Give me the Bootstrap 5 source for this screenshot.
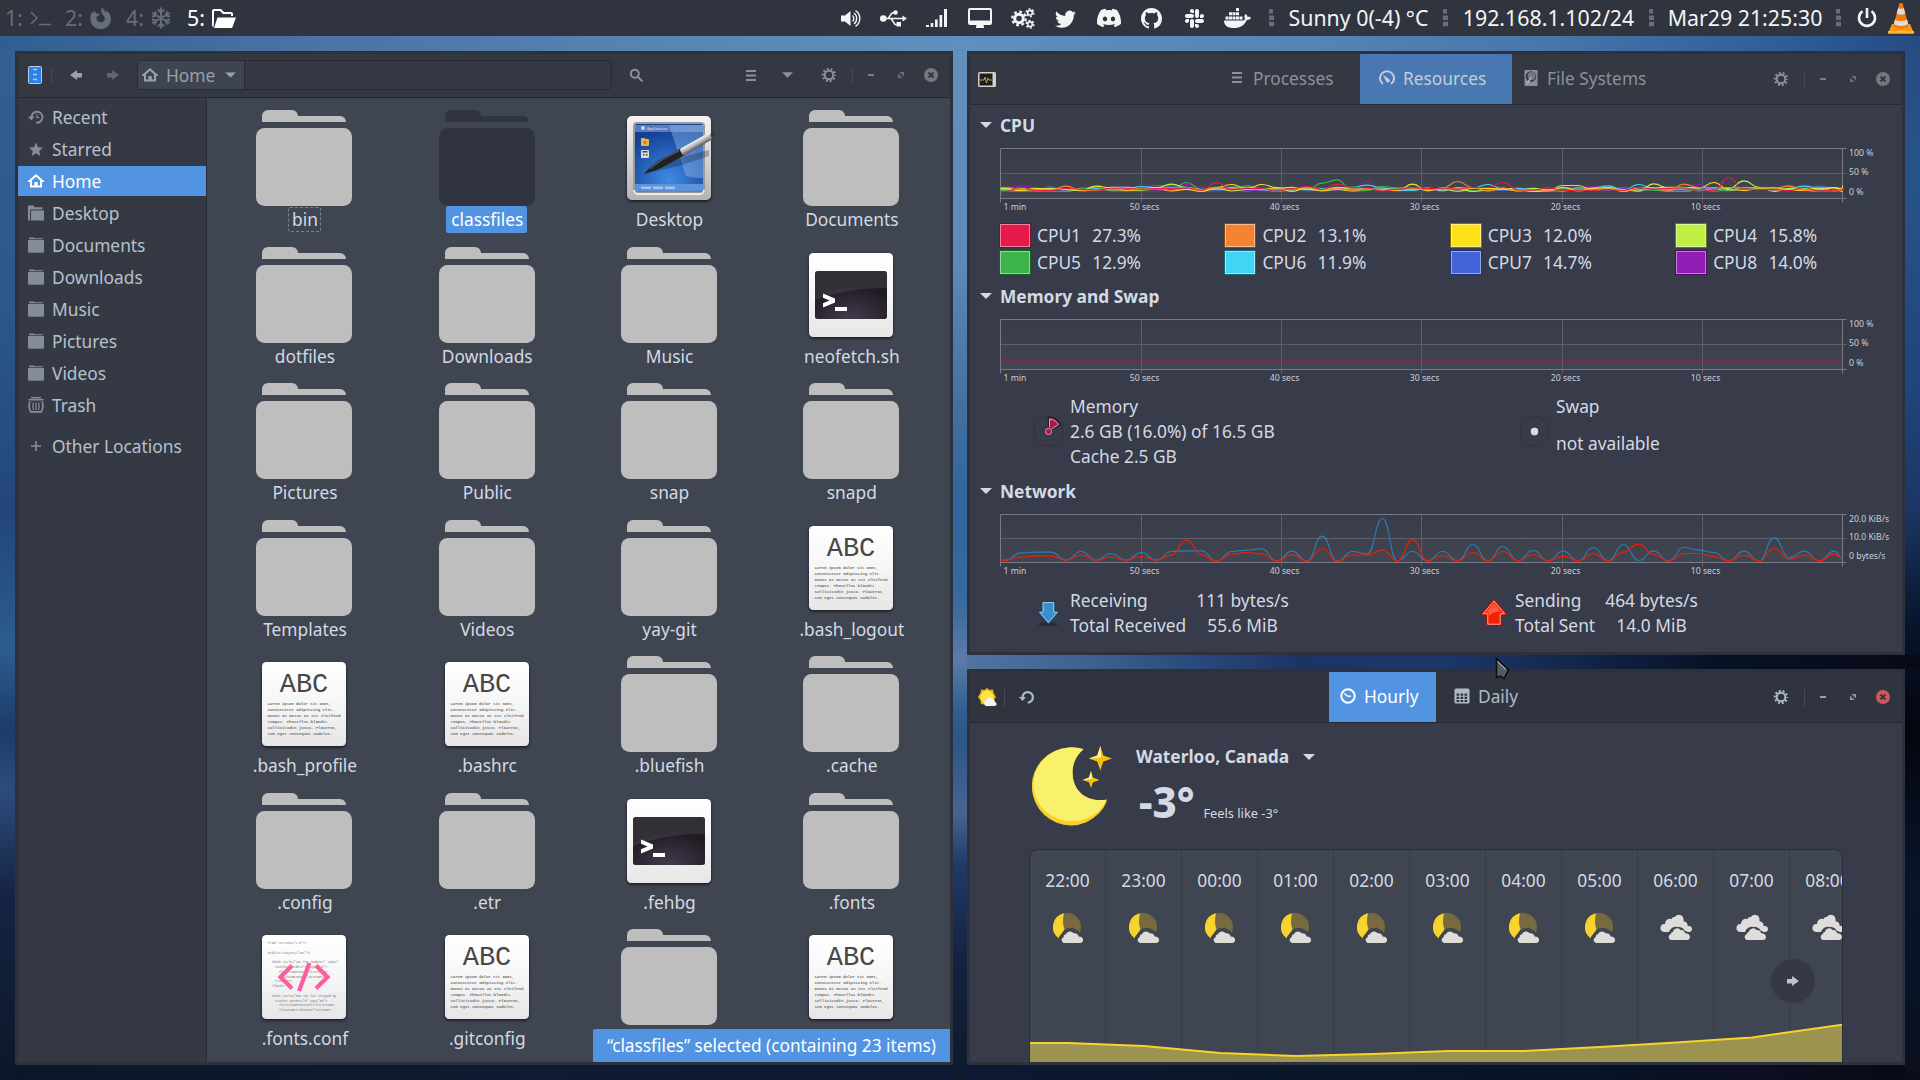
<!DOCTYPE html>
<html lang="en">
<head>
<meta charset="utf-8">
<title>Desktop</title>
<link rel="stylesheet" href="https://cdn.jsdelivr.net/npm/bootstrap@5.3.0/dist/css/bootstrap.min.css">
<style>
html,body{height:100%;overflow:hidden}
body{font-family:"Noto Sans",sans-serif;font-size:17.33px;line-height:25px;color:#d3dae3;
 background:
 linear-gradient(90deg,#315e92 0,#4a6fa4 14%,#5986b4 36%,#5f8fbe 50%,#5684b5 68%,#4a76ab 80%,#2f6096 92%,#264b83 100%) 0 36px/1920px 15px no-repeat,
 linear-gradient(90deg,#5273a0 0,#3d6290 13%,#28477a 25%,#1d3463 35%,#1b3768 50%,#15294f 62%,#061226 78%,#090a18 100%) 967px 655px/953px 14px no-repeat,
 linear-gradient(#335f92 0,#2c578b 25%,#23467a 45%,#2c5c8f 58%,#1d3c69 66%,#2e4b7c 72%,#152443 82%,#0c1729 100%) 0 51px/15px 1029px no-repeat,
 linear-gradient(#6190bd 0,#5d8ab8 20%,#44719f 34%,#31659d 44%,#3a6a9d 54%,#5d7ba9 59%,#30608f 64%,#2b5685 67%,#4a6492 74%,#203a69 79%,#152341 88%,#0d192b 100%) 953px 51px/14px 1029px no-repeat,
 linear-gradient(#264d84 0,#285389 12%,#1f467c 32%,#1c3564 45%,#07142a 56%,#05050e 66%,#08142a 80%,#06152a 88%,#0b0d1b 100%) 1905px 51px/15px 1029px no-repeat,
 linear-gradient(90deg,#0b1729 0,#101a32 28%,#0d1832 52%,#091728 70%,#071426 80%,#0b0e20 92%,#090a14 100%)}
svg{display:block;flex:none}
.topbar{height:36px;background:#2f343f;font-size:21.33px;color:#f3f4f5;line-height:30px}
.ws{color:#666d7b;width:61px;padding-left:5px;gap:7px}
.ws.w1{width:60px}
.ws.on{color:#fff}
.traybox{margin-left:586px}
.slot{width:43px}
.dots{width:25px;color:#666d7b}
.wx{width:149px}.ip{width:181px}.clk{width:162px}.pw{width:32px}
.win{position:absolute;border:3px solid #2d313c;background:#383b49;overflow:hidden}
.w-files{left:15px;top:51px;width:938px;height:1014px}
.w-mon{left:967px;top:51px;width:938px;height:604px}
.w-wx{left:967px;top:669px;width:938px;height:396px}
.hdr{height:44px;background:#333843;border-bottom:1px solid #262a33;color:#8a919d;padding-bottom:1px}
.hdr.tall{height:51px;padding-bottom:0}
.hdr.active{background:#2f343f;color:#b0b9c7}
.vsep{width:1px;height:17px;background:#454a55}
.app{width:33px}
.tall .app{width:34px}
.nb{width:36px}.nback{width:38px;margin-left:5px}
.pathbar{width:475px;height:30px;border:1px solid #272b34;border-radius:4px;margin-left:6px}
.pathbtn{width:107px;height:28px;background:#3e4450;border-right:1px solid #272b34;padding:0 8px 0 4px;border-radius:3px 0 0 3px;color:#99a0ad}
.pathbtn span{margin-left:8px}
.srch{width:48px}.c36{width:36px}.c46{width:46px}.c47{width:47px}.c44{width:44px}.c30{width:30px}
.ctl{padding-right:4px}.ctl .vsep{margin-right:3px}
.side{width:189px;background:#353944;border-right:1px solid #2b2e39;padding-top:4px;color:#b7c0cd}
.side a{height:30px;margin-bottom:2px;padding-left:10px;color:inherit;text-decoration:none}
.side a svg{margin-right:8px;color:#868d99}
.side a.sel{background:#5294e2;color:#fff}.side a.sel svg{color:#fff}
.side a.other{margin-top:11px}
.pane{background:#404552;padding:12px 0 0 6.3px;height:965px;overflow:hidden}
.grid4{width:729.2px}
.cell{width:182.3px;height:136.5px}
.lbl{padding:0 4px 0 5px;height:27px;line-height:27px;white-space:nowrap}
.lbl.foc{outline:1px dashed #7b818c;outline-offset:-2px;border-radius:3px}
.lbl.pick{background:#5294e2;color:#fff;border-radius:2px}
.toastbar{position:absolute;right:0;bottom:0;width:357px;height:33px;background:#5294e2;color:#fff;font-size:17.25px;line-height:33px;white-space:nowrap;border-radius:2px 0 0 0}
.tabx{height:50px;padding-bottom:2px}.tabx svg{margin-right:8px}
.tabs2{margin-left:209px}.tabs3{margin-left:280px}
.t1{width:147px;padding-left:16px}.t2{width:152px;padding-left:19px;background:#4877b1;color:#c3ccd8}.t3{width:146px;padding-left:11px}
.h1t{width:107px;padding-left:11px;background:#5294e2;color:#fff}.h2t{width:90px;padding-left:18px}
.sect{height:40px;font-weight:700;padding-left:10px}.sect svg{margin-right:8px}
.legend{padding-left:29px;height:54px;margin-top:7px}
.lg{width:225.4px;height:26px}
.sw{width:32px;height:25px;border:1px solid;margin-right:6px}
.sw i{display:block;height:100%;border:1px solid rgba(255,255,255,.45)}
.lt{width:104px}
svg text{font-family:"Noto Sans",sans-serif}
svg .mono text{font-family:"Liberation Mono",monospace}
.memrow{height:85px;padding-left:63px}.memrow>div{height:75px;margin-top:8px}
.memrow svg{margin-right:6px}
.m1{width:486px}
.netrow{height:50px;margin-top:7px;padding-left:66px}
.n1{width:396px}
.n1 svg{margin-right:10px}.n2 svg{margin-right:7px}
.nl1{width:119px}.nl2{width:83px}.nv{text-align:center;width:107px}
.wxhead{padding:19px 0 0 62px;height:126px}
.wxt{margin-left:29px;padding-top:2px}
.wxt b{font-weight:700}
.wxt .loc{gap:14px}
.tnow{margin:8px 0 0 3px}
.big{font-weight:800;font-size:42px;line-height:50px}
.feels{font-size:12.8px;line-height:16px;margin-left:9px}
.hours{margin-left:59px;width:814px;height:214px;background:#404552;border:1px solid #2b2e39;border-bottom:0;border-radius:9px 9px 0 0;overflow:hidden;position:relative}
.hr{width:76px;flex:none;border-right:1px solid #383c49;padding-top:18px}
.hr svg{margin:20px auto 0}
.temp{position:absolute;left:0;bottom:0}
.nextb{position:absolute;left:741px;top:109px;width:44px;height:44px;border-radius:50%;background:#353944;color:#b9c3d1}
.cursor{position:absolute;left:1495px;top:657px}
</style>
<script src="https://cdn.jsdelivr.net/npm/bootstrap@5.3.0/dist/js/bootstrap.bundle.min.js"></script>
</head>
<body>
<svg width="0" height="0" class="position-absolute">
<defs>
<linearGradient id="pg" x1="0" y1="0" x2="0" y2="1"><stop offset="0" stop-color="#fff"/><stop offset=".5" stop-color="#f6f6f6"/><stop offset="1" stop-color="#e6e6e6"/></linearGradient>
<linearGradient id="fr" x1="0" y1="0" x2="0" y2="1"><stop offset="0" stop-color="#f4f4f4"/><stop offset="1" stop-color="#b4b4b4"/></linearGradient>
<radialGradient id="scr" cx=".5" cy=".82" r=".75"><stop offset="0" stop-color="#3f8be4"/><stop offset="1" stop-color="#143f94"/></radialGradient>
<radialGradient id="trm" cx=".5" cy="1" r=".7"><stop offset="0" stop-color="#453a50"/><stop offset="1" stop-color="#1e1b21"/></radialGradient>
<linearGradient id="pen" x1="0" y1="0" x2="0" y2="1"><stop offset="0" stop-color="#f4f4f4"/><stop offset=".5" stop-color="#b5b5b5"/><stop offset="1" stop-color="#555"/></linearGradient>
<linearGradient id="gb" x1="0" y1="0" x2="0" y2="1"><stop offset="0" stop-color="#383b49"/><stop offset="1" stop-color="#414650"/></linearGradient>
<filter id="sh" x="-10%" y="-10%" width="120%" height="125%"><feDropShadow dx="0" dy="1.5" stdDeviation="1.5" flood-color="#000" flood-opacity=".65"/></filter>
<symbol id="folder" viewBox="0 0 96 96"><path fill="currentColor" d="M6 12V6a6 6 0 0 1 6-6h24a6 6 0 0 1 6 6h42a6 6 0 0 1 6 6z"/><rect y="18" width="96" height="78" rx="8.5" fill="currentColor"/></symbol>
<symbol id="abc" viewBox="0 0 96 96"><rect x="6" y="6" width="84" height="84" rx="4.5" fill="url(#pg)" filter="url(#sh)"/>
<g class="mono"><text x="48" y="36" text-anchor="middle" font-size="27" fill="#474747">ABC</text>
<g font-size="4.200" font-weight="700" fill="#777"><text x="11.500" y="48.500" textLength="64">Lorem ipsum dolor sit amet,</text><text x="11.500" y="54.500" textLength="67">consectetur adipiscing elit.</text><text x="11.500" y="60.500" textLength="73">Donec at metus at est eleifend</text><text x="11.500" y="66.500" textLength="60">tempus. Phasellus blandit</text><text x="11.500" y="72.500" textLength="70">sollicitudin justo. Placerat,</text><text x="11.500" y="78.500" textLength="65">sem eget consequat sodales.</text></g></g></symbol>
<symbol id="xml" viewBox="0 0 96 96"><rect x="6" y="6" width="84" height="84" rx="4.500" fill="url(#pg)" filter="url(#sh)"/>
<g class="mono" font-size="3.100" fill="#777"><text x="11.500" y="15">&lt;?xml version="1.0"?&gt;</text><text x="11.500" y="24.500">&lt;biblio subject="XML"/&gt;</text><text x="15.500" y="34">&lt;book title="XML for newbies" isbn="</text><text x="19" y="39">&lt;author gender="M" age="45"&gt;</text><text x="23" y="43.500">&lt;firstname&gt;Dan&lt;/firstname&gt;</text><text x="23" y="48.500">&lt;lastname&gt;Doe&lt;/lastname&gt;</text><text x="19" y="53">&lt;/author&gt;</text><text x="15.500" y="58">&lt;/book&gt;</text><text x="15.500" y="67.500">&lt;book title="How XML has changed my</text><text x="19" y="72.500">&lt;author gender="M" age="33"&gt;</text><text x="23" y="77">&lt;firstname&gt;Michael&lt;/firstname&gt;</text><text x="23" y="82">&lt;lastname&gt;Johnson&lt;/lastname&gt;</text></g>
<g fill="none" stroke="#fd5da0" stroke-width="4.200"><path d="M36 36.500 24.500 48 36 59.500M60 36.500 71.500 48 60 59.500"/><path d="M53.500 34 43 62"/></g></symbol>
<symbol id="term" viewBox="0 0 96 96"><rect x="6" y="6" width="84" height="84" rx="4.500" fill="url(#pg)" filter="url(#sh)"/><rect x="12" y="24" width="72" height="48" rx="2.500" fill="url(#trm)"/><path d="M12 26.500a2.500 2.500 0 0 1 2.500-2.500h67a2.500 2.500 0 0 1 2.500 2.500V41c-28 0-52 4-72 12z" fill="#fff" opacity=".09"/><path d="M20 46.500v4.200l6.500 2.800-6.500 2.800v4.200l12-5v-4z" fill="#fff"/><rect x="32" y="60" width="12" height="4" fill="#fff"/></symbol>
<symbol id="desk" viewBox="0 0 96 96"><rect x="6" y="6" width="84" height="84" rx="5" fill="url(#fr)" filter="url(#sh)"/><rect x="12" y="12" width="72" height="72" rx="4" fill="#9b9b9b"/><path d="M13 80a4 4 0 0 0 4 4h62a4 4 0 0 0 4-4" fill="none" stroke="#fff" stroke-width="1.500"/><rect x="14" y="14" width="68" height="67.500" rx="2" fill="url(#scr)"/><rect x="14" y="15" width="68" height="7" fill="#6d92cb" opacity=".75"/><circle cx="22" cy="18" r="2" fill="#c8d8f0"/><text x="26" y="19.600" font-size="3.300" font-weight="700" fill="#b8cbea">Applications</text><path d="M48 15h34v53c-8 0-12-1-17-2z" fill="#8db8ec" opacity=".45"/><rect x="14" y="74" width="68" height="7" fill="#5d93db"/><path d="M20 76.500h10v2.500H20zM32 76.500h10v2.500H32zM44 76.500h10v2.500H44z" fill="#9fc4f0"/><rect x="20" y="29" width="8" height="7" rx="1" fill="#e9b04c"/><rect x="20" y="28" width="4" height="3" fill="#e9b04c"/><circle cx="24" cy="32.500" r="1.400" fill="#b97b20"/><rect x="20" y="40" width="8" height="8" rx="1" fill="#ddd"/><path d="M21.500 41h5v1.500h-5zM22 44h1.500v1.500H22zM25 44h1.500v1.500H25z" fill="#444"/><path d="M30 62 58 56 88 46V40L62 47z" fill="#123" opacity=".3"/><g transform="translate(23 64) rotate(-29.500)"><path d="M0 0C10-4 22-5.500 30-4H44V3.500H26C16 3.500 8 2 0 0z" fill="#222"/><path d="M8-1.500C18-4 24-3.500 42-3" stroke="#666" stroke-width="1" fill="none"/><rect x="43" y="-4" width="34" height="7.500" rx="2" fill="url(#pen)"/><rect x="77" y="-2" width="4" height="3.500" rx="1" fill="#333"/></g></symbol>
<symbol id="i-home" viewBox="0 0 16 16"><path fill="currentColor" fill-rule="evenodd" d="M8 1 0 8v1h2v5.500h12V9h2V8zM4 7.200 8 3.700l4 3.500v5.300h-2.200V9H6.400v3.500H4z"/></symbol>
<symbol id="i-fold" viewBox="0 0 16 16"><path fill="currentColor" d="M1 .5h5l1 .8h8v.9H1zM0 3h16v12a.8.800 0 0 1-.8.800H.8a.8.800 0 0 1-.8-.8z"/></symbol>
<symbol id="i-desk" viewBox="0 0 16 16"><path fill="currentColor" d="M0 .5h6v1.800h8.500V4.500H2V15.500H0zM3 5.500h13v10H3z"/></symbol>
<symbol id="i-gear" viewBox="0 0 16 16"><g fill="none" stroke="currentColor"><circle cx="8" cy="8" r="4.300" stroke-width="2"/><circle cx="8" cy="8" r="6.200" stroke-width="2" stroke-dasharray="1.950 1.946" stroke-dashoffset="1"/></g></symbol>
<symbol id="i-caret" viewBox="0 0 12 6"><path fill="currentColor" d="M0 0h12L6 6z"/></symbol>
<symbol id="i-max" viewBox="0 0 8 8"><path fill="currentColor" d="M2.500 1H7v4.500zM1 2.500 5.500 7H1z"/></symbol>
<symbol id="i-close" viewBox="0 0 14 14"><circle cx="7" cy="7" r="7" fill="currentColor"/><path d="m4.500 4.500 5 5m0-5-5 5" stroke="#2f343f" stroke-width="1.800"/></symbol>
<symbol id="i-arr" viewBox="0 0 12 10"><path fill="currentColor" d="M5 0v3H0v4.500h5V10l7-5z"/></symbol>
<symbol id="i-dots" viewBox="0 0 5 18"><path fill="currentColor" d="M0 1a1 1 0 0 1 1-1h3v4.500H0zM0 6.500h5V11H0zM0 12.800h5v4.400H0z"/></symbol>
<symbol id="moon" viewBox="0 0 30 30"><circle cx="14" cy="14" r="14" fill="#776a3e"/><path d="M11 .3A14 14 0 0 0 6 25.500L12.500 18C9 12 10 5 11 .3z" fill="#f6d32d"/><path d="M8.500 30.500a5 5 0 0 1-1.500-8l5-6.500 7-1.500 6 3 5.500 6-1 7z" fill="#404552"/><path d="M11 30a3 3 0 0 1-.3-5.800 2.300 2.300 0 0 1 2-2.700 4.600 4.600 0 0 1 8-1.200c2.600-.6 4.700 1.200 4.800 3.200 2.800-.2 4.700 1.300 4.500 3.700-.1 1.700-1.300 2.800-3 2.800z" fill="#deddda"/></symbol>
<symbol id="clouds" viewBox="0 0 32 27"><path d="M4 18a4 4 0 1 1 1-8 5 5 0 0 1 6.500-5C12.500 3 14 3 15 3a4.600 4.600 0 0 1 8.500 2.300l.2 2c3 .5 4.300 2.700 3.800 4.700 3-.4 4.500 1 4.500 3 0 1.700-1.200 3-3 3z" fill="#deddda"/><path d="M7 24a5 5 0 0 1 2-5.500 7 7 0 0 1 9-5.500c4 0 6 2 6.500 3.500 3 .5 5 3 5.300 5l.2 4z" fill="#404552"/><path d="M11 26a3 3 0 0 1-.3-5.800 2.300 2.300 0 0 1 2-2.200 4.600 4.600 0 0 1 8-2c2.600-.4 4.200 1.500 4.500 3.200 2.800 0 4.800 1.500 4.800 3.800 0 1.700-1.300 3-3 3z" fill="#deddda"/></symbol>
</defs>
</svg>

<nav class="topbar d-flex align-items-center text-nowrap">
  <div class="ws w1 d-flex align-items-center">1:<svg width="21" height="16" viewBox="0 0 21 16" fill="none" stroke="currentColor" stroke-width="1.500"><path d="m1 2 6 6-6 6M9 14.500h12"/></svg></div>
  <div class="ws d-flex align-items-center">2:<svg width="21" height="22" viewBox="0 0 21 22"><path fill="currentColor" fill-rule="evenodd" d="M12.500 0c.5 2.500 2 3.500 4 5.500.1-.8 0-1.500-.3-2.200C19 5.500 21 8.500 21 12A10.200 10 0 0 1 .3 12C.3 9 1 6.500 2.300 4.500v2C3 5.300 4 4.500 5 4c0 1.200.8 2 1.800 2.600 1 .3 2.200.3 3 .4-1 2-2.500 2-3 2.500-.6 1.500-.3 3 .5 4 2 2.500 5.500 2.200 7-.1 1-2 .3-4-1-5.200C10.500 6 10.800 2.500 12.500 0z"/></svg></div>
  <div class="ws d-flex align-items-center">4:<svg width="20" height="22" viewBox="0 0 20 22" fill="none" stroke="currentColor" stroke-width="1.900"><path d="M10 .5v21M1 5.700l18 10.600M1 16.300 19 5.700M6.800 2.500 10 5.500l3.200-3M6.800 19.500l3.200-3 3.200 3M1 9.500l4-1L4 4.200M19 9.500l-4-1 1-4.300M1 12.500l4 1-1 4.300M19 12.500l-4 1 1 4.300"/></svg></div>
  <div class="ws on d-flex align-items-center">5:<svg width="24" height="19" viewBox="0 0 24 19"><path fill="currentColor" d="M2 0h7l3 3h7a2 2 0 0 1 2 2v2h-2V5h-8L8 2H2v11L1.500 18A2 2 0 0 1 0 16V2a2 2 0 0 1 2-2zM5.500 8.500H24L20.500 18a1.500 1.500 0 0 1-1.500 1H2z"/></svg></div>
  <div class="traybox d-flex align-items-center" id="tray">
    <div class="slot d-flex justify-content-center"><svg width="20" height="17" viewBox="0 0 20 17"><path fill="currentColor" d="M0 5.500h4L9.500 1v15L4 11.500H0z"/><path fill="none" stroke="currentColor" stroke-width="1.400" d="M11.500 5.500c1.700 1.500 1.700 4.500 0 6M13 3c3.500 2.500 3.500 8.500 0 11M14.500.7c5.700 3.500 5.700 12 0 15.600"/></svg></div>
    <div class="slot d-flex justify-content-center"><svg width="27" height="17" viewBox="0 0 27 17"><circle cx="3.300" cy="8.500" r="3.300" fill="currentColor"/><path fill="none" stroke="currentColor" stroke-width="1.500" d="M3 8.500h20M8 8.500l4-5.500h3M11 8.500l4 6h3"/><circle cx="15.500" cy="2.500" r="2.300" fill="currentColor"/><path fill="currentColor" d="M16.500 12H21v4.500h-4.500zM22.500 5.500 27 8.500l-4.500 3z"/></svg></div>
    <div class="slot d-flex justify-content-center"><svg width="21" height="18" viewBox="0 0 21 18"><path fill="currentColor" d="M0 16h3v2H0zM4.700 14h2.600v4H4.700zM9 10.500h2.700V18H9zM13.500 6h2.700v12h-2.700zM18 0h3v18h-3z"/></svg></div>
    <div class="slot d-flex justify-content-center"><svg width="24" height="20" viewBox="0 0 24 20"><path fill="currentColor" fill-rule="evenodd" d="M2 0h20a2 2 0 0 1 2 2v13a2 2 0 0 1-2 2h-6.500l.5 1.800V20H8v-1.200l.5-1.800H2a2 2 0 0 1-2-2V2a2 2 0 0 1 2-2zm0 2v10.500h20V2z"/></svg></div>
    <div class="slot d-flex justify-content-center"><svg width="24" height="21" viewBox="0 0 24 21" fill="none" stroke="currentColor"><circle cx="8" cy="10.500" r="4.300" stroke-width="3"/><circle cx="8" cy="10.500" r="6.800" stroke-width="2.200" stroke-dasharray="2.800 2.540"/><g id="sg"><circle cx="19" cy="4.700" r="2.300" stroke-width="1.600"/><circle cx="19" cy="4.700" r="3.800" stroke-width="1.500" stroke-dasharray="2 1.980"/></g><use href="#sg" y="11.500"/></svg></div>
    <div class="slot d-flex justify-content-center"><svg width="21" height="21" viewBox="0 0 16 16"><path fill="currentColor" d="M5.026 15c6.038 0 9.341-5.003 9.341-9.334 0-.14 0-.282-.006-.422A6.685 6.685 0 0 0 16 3.542a6.658 6.658 0 0 1-1.889.518 3.301 3.301 0 0 0 1.447-1.817 6.533 6.533 0 0 1-2.087.793A3.286 3.286 0 0 0 7.875 6.030a9.325 9.325 0 0 1-6.767-3.429 3.289 3.289 0 0 0 1.018 4.382A3.323 3.323 0 0 1 .64 6.575v.045a3.288 3.288 0 0 0 2.632 3.218 3.203 3.203 0 0 1-.865.115 3.230 3.230 0 0 1-.614-.057 3.283 3.283 0 0 0 3.067 2.277A6.588 6.588 0 0 1 .78 13.580a6.320 6.320 0 0 1-.78-.045A9.344 9.344 0 0 0 5.026 15z"/></svg></div>
    <div class="slot d-flex justify-content-center"><svg width="24" height="24" viewBox="0 0 16 16"><path fill="currentColor" d="M13.545 2.907a13.227 13.227 0 0 0-3.257-1.011.05.050 0 0 0-.052.025c-.141.250-.297.577-.406.833a12.190 12.190 0 0 0-3.658 0 8.258 8.258 0 0 0-.412-.833.051.051 0 0 0-.052-.025c-1.125.194-2.220.534-3.257 1.011a.041.041 0 0 0-.021.018C.356 6.024-.213 9.047.066 12.032c.001.014.010.028.021.037a13.276 13.276 0 0 0 3.995 2.020.05.050 0 0 0 .056-.019c.308-.420.582-.863.818-1.329a.05.050 0 0 0-.010-.059 8.875 8.875 0 0 1-1.266-.606.05.050 0 0 1-.005-.085c.084-.063.168-.129.248-.195a.05.050 0 0 1 .051-.007c2.619 1.196 5.454 1.196 8.041 0a.052.052 0 0 1 .053.007c.080.066.164.132.248.195a.051.051 0 0 1-.004.085 8.254 8.254 0 0 1-1.249.594.05.050 0 0 0-.027.071c.240.465.515.909.817 1.329a.05.050 0 0 0 .056.019 13.235 13.235 0 0 0 4.001-2.020.049.049 0 0 0 .021-.037c.334-3.451-.559-6.449-2.366-9.106a.034.034 0 0 0-.020-.019Zm-8.198 7.307c-.789 0-1.438-.724-1.438-1.612 0-.889.637-1.613 1.438-1.613.807 0 1.450.730 1.438 1.613 0 .888-.637 1.612-1.438 1.612Zm5.316 0c-.788 0-1.438-.724-1.438-1.612 0-.889.637-1.613 1.438-1.613.807 0 1.451.730 1.438 1.613 0 .888-.631 1.612-1.438 1.612Z"/></svg></div>
    <div class="slot d-flex justify-content-center"><svg width="21" height="21" viewBox="0 0 16 16"><path fill="currentColor" d="M8 0C3.580 0 0 3.580 0 8c0 3.540 2.290 6.530 5.470 7.590.400.070.550-.170.550-.380 0-.190-.010-.820-.010-1.490-2.010.370-2.530-.490-2.690-.940-.090-.230-.480-.940-.820-1.130-.280-.150-.680-.520-.010-.530.630-.010 1.080.580 1.230.820.720 1.210 1.870.870 2.330.660.070-.520.280-.870.510-1.070-1.780-.200-3.640-.890-3.640-3.950 0-.870.310-1.590.820-2.150-.080-.200-.360-1.020.080-2.120 0 0 .670-.210 2.200.820.640-.180 1.320-.270 2-.270.680 0 1.360.090 2 .270 1.530-1.040 2.200-.820 2.200-.820.440 1.100.160 1.920.080 2.120.510.560.820 1.270.820 2.150 0 3.070-1.870 3.750-3.650 3.950.290.250.540.730.540 1.480 0 1.070-.010 1.930-.010 2.200 0 .210.150.460.550.380A8.012 8.012 0 0 0 16 8c0-4.420-3.580-8-8-8z"/></svg></div>
    <div class="slot d-flex justify-content-center"><svg width="19" height="19" viewBox="0 0 16 16"><path fill="currentColor" d="M3.362 10.110c0 .926-.756 1.681-1.681 1.681S0 11.036 0 10.111C0 9.186.756 8.430 1.680 8.430h1.682v1.680zm.846 0c0-.924.756-1.680 1.681-1.680s1.681.756 1.681 1.680v4.210c0 .924-.756 1.680-1.680 1.680a1.685 1.685 0 0 1-1.682-1.680v-4.210zM5.890 3.362c-.926 0-1.682-.756-1.682-1.681S4.964 0 5.890 0s1.680.756 1.680 1.680v1.682H5.890zm0 .846c.924 0 1.680.756 1.680 1.681S6.814 7.570 5.890 7.570H1.680C.757 7.570 0 6.814 0 5.890c0-.926.756-1.682 1.680-1.682h4.210zm6.749 1.682c0-.926.755-1.682 1.680-1.682.925 0 1.681.756 1.681 1.681s-.756 1.681-1.680 1.681h-1.681V5.890zm-.848 0c0 .924-.755 1.680-1.680 1.680A1.685 1.685 0 0 1 8.430 5.890V1.680C8.430.757 9.186 0 10.110 0c.926 0 1.681.756 1.681 1.680v4.210zm-1.681 6.748c.926 0 1.682.756 1.682 1.681S11.036 16 10.110 16s-1.681-.756-1.681-1.680v-1.682h1.680zm0-.847c-.924 0-1.680-.755-1.680-1.680 0-.925.756-1.681 1.680-1.681h4.210c.924 0 1.680.756 1.680 1.680 0 .926-.756 1.681-1.680 1.681h-4.210z"/></svg></div>
    <div class="slot d-flex justify-content-center"><svg width="27" height="20" viewBox="0 0 27 20"><path fill="currentColor" d="M12 0h3v3h-3zM5 4.300h3v3H5zM8.500 4.300h3v3h-3zM12 4.300h3v3h-3zM1.500 8.500h3v3h-3zM5 8.500h3v3H5zM8.500 8.500h3v3h-3zM12 8.500h3v3h-3zM15.500 8.500h3v3h-3zM0 12.500h18c2 0 3-.6 3-1.500-1-2-.6-3.800.5-5 1.500 1 2 2 2 3 1.200-.3 2.500-.1 3.500.5-.6 1.800-2 2.500-4.300 2.500C20.500 17.500 16 20 10 20 3.500 20 0 17.500 0 12.500z"/></svg></div>
    <div class="dots d-flex justify-content-center"><svg width="5" height="18"><use href="#i-dots"/></svg></div><div class="wx text-center">Sunny 0(-4) °C</div>
    <div class="dots d-flex justify-content-center"><svg width="5" height="18"><use href="#i-dots"/></svg></div><div class="ip text-center">192.168.1.102/24</div>
    <div class="dots d-flex justify-content-center"><svg width="5" height="18"><use href="#i-dots"/></svg></div><div class="clk text-center">Mar29 21:25:30</div>
    <div class="dots d-flex justify-content-center"><svg width="5" height="18"><use href="#i-dots"/></svg></div>
    <div class="pw d-flex justify-content-center"><svg width="20" height="20" viewBox="0 0 20 20" fill="none" stroke="currentColor" stroke-width="2.600"><path d="M5.500 3.300a8 8 0 1 0 9 0M10 0v10"/></svg></div>
    <svg class="ms-1" width="28" height="31" viewBox="0 0 28 31"><path d="M5 21h18l4 9.500H1z" fill="#ff9a0c"/><path d="M1 28h26v2.500H1z" fill="#ffb733"/><path d="M12.500 0h3l6.300 23.500c-4 3-11.600 3-15.600 0z" fill="#f47a0c"/><path d="m11.200 5-1.500 5.500c2 1.500 6.600 1.500 8.600 0L16.800 5c-1 1-4.600 1-5.600 0zM8 16.500 6.800 21c3.500 2.500 10.900 2.500 14.400 0L20 16.500c-3 2-9 2-12 0z" fill="#ddd"/></svg>
  </div>
</nav>

<section class="win w-files">
  <header class="hdr d-flex align-items-center">
    <div class="app d-flex justify-content-center"><svg width="14" height="18" viewBox="0 0 14 18"><rect x=".5" y=".5" width="13" height="17" rx="1" fill="#2c82e6" stroke="#b9cfe9"/><path d="M5 3.500h4M5 8.500h4M5 13.500h4" stroke="#a8ccf5" stroke-width="1.500"/></svg></div>
    <div class="vsep"></div>
    <div class="nback d-flex justify-content-center"><svg width="12" height="10" viewBox="0 0 12 10"><path fill="#99a0ad" d="M7 0v3h5v4.500H7V10L0 5z"/></svg></div>
    <div class="nb d-flex justify-content-center"><svg width="12" height="10" color="#5f6571"><use href="#i-arr"/></svg></div>
    <div class="pathbar"><div class="pathbtn d-flex align-items-center"><svg width="16" height="16"><use href="#i-home"/></svg><span>Home</span><svg class="ms-auto" width="11" height="6" viewBox="0 0 12 6"><use href="#i-caret"/></svg></div></div>
    <div class="srch d-flex justify-content-center"><svg width="15" height="15" viewBox="0 0 15 15" fill="none" stroke="currentColor" stroke-width="2"><circle cx="5.800" cy="5.800" r="4"/><path d="m8.500 8.500 5 5"/></svg></div>
    <div class="ctl ms-auto d-flex align-items-center">
      <div class="c36 d-flex justify-content-center"><svg width="10" height="11" viewBox="0 0 10 11"><path fill="currentColor" d="M0 0h10v2H0zM0 4.500h10v2H0zM0 9h10v2H0z"/></svg></div>
      <div class="c36 d-flex justify-content-center"><svg width="11" height="6"><use href="#i-caret"/></svg></div>
      <div class="c47 d-flex justify-content-center"><svg width="16" height="16"><use href="#i-gear"/></svg></div>
      <div class="vsep"></div>
      <div class="c30 d-flex justify-content-center"><svg width="6" height="2"><rect width="6" height="2" fill="#777d87"/></svg></div>
      <div class="c30 d-flex justify-content-center"><svg width="8" height="8" color="#6a707b"><use href="#i-max"/></svg></div>
      <div class="c30 d-flex justify-content-center"><svg width="14" height="14" color="#747881"><use href="#i-close"/></svg></div>
    </div>
  </header>
  <div class="d-flex">
    <nav class="side" id="side"></nav>
    <div class="pane flex-grow-1"><div class="grid4 d-flex flex-wrap" id="files"></div></div>
  </div>
  <div class="toastbar text-center">“classfiles” selected (containing 23 items)</div>
</section>

<section class="win w-mon">
  <header class="hdr tall d-flex align-items-center">
    <div class="app d-flex justify-content-center"><svg width="18" height="15" viewBox="0 0 18 15"><rect width="18" height="15" rx="1.500" fill="#d6cfc9"/><rect x="1.500" y="1.500" width="13" height="12" fill="#231a28"/><path d="M2 8h4l1-3 1.500 6L10 6l1 2h3" fill="none" stroke="#b8a428"/></svg></div>
    <div class="tabs2 d-flex">
      <div class="tabx t1 d-flex align-items-center"><svg width="16" height="16" viewBox="0 0 16 16"><path fill="currentColor" d="M3 2h10v2H3zM3 6.500h10v2H3zM3 11h10v2H3z"/></svg>Processes</div>
      <div class="tabx t2 d-flex align-items-center"><svg width="16" height="16" viewBox="0 0 16 16"><path fill="none" stroke="currentColor" stroke-width="2" d="M4 14A7 7 0 1 1 12 14"/><path fill="currentColor" d="m4 5 5.800 3.800a2 2 0 1 1-2.800 2.500z"/></svg>Resources</div>
      <div class="tabx t3 d-flex align-items-center"><svg width="16" height="16" viewBox="0 0 16 16"><rect x="1.500" width="13" height="16" rx="1" fill="currentColor"/><circle cx="8" cy="6.500" r="5.300" fill="#333843"/><circle cx="8.600" cy="6" r="4" fill="#737a86"/><path d="m3 13.500 5-7 1 .8-3.500 6.200z" fill="#b0b6c0"/></svg>File Systems</div>
    </div>
    <div class="ctl ms-auto d-flex align-items-center">
      <div class="c46 d-flex justify-content-center"><svg width="16" height="16"><use href="#i-gear"/></svg></div>
      <div class="vsep"></div>
      <div class="c30 d-flex justify-content-center"><svg width="6" height="2"><rect width="6" height="2" fill="#777d87"/></svg></div>
      <div class="c30 d-flex justify-content-center"><svg width="8" height="8" color="#6a707b"><use href="#i-max"/></svg></div>
      <div class="c30 d-flex justify-content-center"><svg width="14" height="14" color="#747881"><use href="#i-close"/></svg></div>
    </div>
  </header>
  <div class="sect d-flex align-items-center"><svg width="12" height="6"><use href="#i-caret"/></svg>CPU</div>
  <div id="g-cpu"></div>
  <div class="legend d-flex flex-wrap" id="legend"></div>
  <div class="sect d-flex align-items-center"><svg width="12" height="6"><use href="#i-caret"/></svg>Memory and Swap</div>
  <div id="g-mem"></div>
  <div class="memrow d-flex">
    <div class="m1 d-flex align-items-center"><svg width="31" height="31" viewBox="-15.500 -15.500 31 31"><circle r="14.800" fill="none" stroke="#30333e"/><path d="M0 0V-14.500A14 14 0 0 1 12-7z" fill="#ab1852" stroke="#24262e" stroke-width="1.500"/><path d="M1-3V-12.500A12 12 0 0 1 10-7L3-2.500" fill="#ab1852" stroke="#e59ab6"/><circle r="4.300" fill="#24262e"/><circle r="3.200" fill="#ab1852" stroke="#e59ab6"/></svg><div>Memory<br>2.6 GB (16.0%) of 16.5 GB<br>Cache 2.5 GB</div></div>
    <div class="d-flex align-items-center"><svg width="31" height="31" viewBox="-15.500 -15.500 31 31"><circle r="14.800" fill="none" stroke="#30333e"/><circle r="4.500" fill="#d3dae3" stroke="#2a2d36" stroke-width="1.200"/></svg><div class="d-flex flex-column h-100"><span class="mb-2 pb-1">Swap</span><span>not available</span></div></div>
  </div>
  <div class="sect d-flex align-items-center"><svg width="12" height="6"><use href="#i-caret"/></svg>Network</div>
  <div id="g-net"></div>
  <div class="netrow d-flex">
    <div class="d-flex align-items-center n1 flex-shrink-0 me-5">
      <svg width="24" height="30" viewBox="-2 0 28 30" overflow="visible"><ellipse cx="12" cy="28" rx="12" ry="2.500" fill="#000" opacity=".25"/><path d="M5 1.500h15V13h5.500L12.500 28-.5 13H5z" fill="#2f83bf" stroke="#153a5a" stroke-width="1"/><path d="M6.300 2.800h12.400v11.300h4L12.500 26 2.300 14.100h4z" fill="#3a8ecb" stroke="#aad2ec"/></svg>
      <div class="nl1">Receiving<br>Total Received</div><div class="nv">111 bytes/s<br>55.6 MiB</div>
    </div>
    <div class="d-flex align-items-center n2">
      <svg width="28" height="30" viewBox="0 0 28 30"><path d="M6.500 27.500V17H.5L14 1l13.500 16h-6v10.500z" fill="#f01c04" stroke="#8e1a10"/><path d="M7.800 26.200V15.700h-4.500L14 3l10.700 12.700h-4.500v10.500z" fill="#f22105" stroke="#ff9c8e"/><path d="M9 14.500H6L14 5l7 8.500c-4 0-8 .5-12 4z" fill="#ff8170" opacity=".6"/></svg>
      <div class="nl2">Sending<br>Total Sent</div><div class="nv">464 bytes/s<br>14.0 MiB</div>
    </div>
  </div>
</section>

<section class="win w-wx">
  <header class="hdr tall active d-flex align-items-center">
    <div class="app d-flex justify-content-center"><svg width="19" height="19" viewBox="0 0 19 19"><path d="m9 0 2.500 2 3.500-.5.500 3.500 2.500 4-2.500 3.500-.5 3.500-3.500.5L9 18.500l-2.500-2L3 16l-.5-3.500L0 9l2.500-4L3 1.500 6.500 2z" fill="#f0b71c"/><circle cx="9" cy="9" r="6.500" fill="#ffe34d"/><path d="M8 18a3 3 0 0 1 0-5.500 3.500 3.500 0 0 1 6-1.500c2 0 3 1.500 3 3 2.500 1 2 4-.5 4z" fill="#f4f4f6"/></svg></div>
    <div class="vsep"></div>
    <div class="c44 d-flex justify-content-center"><svg width="16" height="16" viewBox="0 0 16 16"><path fill="none" stroke="currentColor" stroke-width="2.200" d="M3.500 8.500A5.200 5.200 0 1 1 8.700 13.500"/><path fill="currentColor" d="M0 8h7l-3.500 4z"/></svg></div>
    <div class="tabs3 d-flex" id="wtabs">
      <div class="tabx h1t d-flex align-items-center"><svg width="16" height="16" viewBox="0 0 16 16" fill="none" stroke="currentColor"><circle cx="8" cy="8" r="6.700" stroke-width="2"/><path d="M4 5.500 8 8.300h3" stroke-width="1.400"/></svg>Hourly</div>
      <div class="tabx h2t d-flex align-items-center"><svg width="16" height="16" viewBox="0 0 16 16"><path fill="currentColor" fill-rule="evenodd" d="M2 .5h12a1.500 1.500 0 0 1 1.500 1.500v12a1.500 1.500 0 0 1-1.500 1.500H2A1.500 1.500 0 0 1 .5 14V2A1.500 1.500 0 0 1 2 .5zM2.500 5.500v2.200h2.700V5.500zm4 0v2.200h2.700V5.500zm4 0v2.200h2.700V5.500zm-8 3.200v2.200h2.700V8.700zm4 0v2.200h2.700V8.700zm4 0v2.200h2.700V8.700zm-8 3.200V14h2.700v-2.100zm4 0V14h2.700v-2.100zm4 0V14h2.700v-2.100z"/></svg>Daily</div>
    </div>
    <div class="ctl ms-auto d-flex align-items-center">
      <div class="c46 d-flex justify-content-center"><svg width="16" height="16"><use href="#i-gear"/></svg></div>
      <div class="vsep"></div>
      <div class="c30 d-flex justify-content-center"><svg width="6" height="2"><rect width="6" height="2" fill="#9aa2ae"/></svg></div>
      <div class="c30 d-flex justify-content-center"><svg width="8" height="8" color="#8e95a1"><use href="#i-max"/></svg></div>
      <div class="c30 d-flex justify-content-center"><svg width="14" height="14" color="#cc575d"><use href="#i-close"/></svg></div>
    </div>
  </header>
  <div class="wxhead d-flex">
    <svg width="80" height="84" viewBox="0 0 80 84"><path d="M51.500 7.500A39 39 0 1 0 75 59C54 62 40.500 49 40.500 30.500 40.500 21 44.500 13 51.500 7.500z" fill="#f5d02c"/><path d="M51.500 7A38.500 37 0 1 0 75 57.500C54 61 40.500 48 40.500 30.500 40.500 21 44.500 13 51.500 7z" fill="#f9f06b"/><path d="m68.300 4 3 9.500L80 16.500l-8.700 3-3 9-3-9-8.500-3 8.500-3zM59 29l2 6.500 6.500 2.500-6.500 2.200L59 46l-2-5.800-6.500-2.200 6.500-2.500z" fill="#f5c211"/><path d="m68.300 4 1 11.500-12.500 1 8.500-3zM59 29l.7 8L50.500 38l6.500-2.500z" fill="#fff3a0"/></svg>
    <div class="wxt ms-4">
      <div class="loc d-flex align-items-center"><b>Waterloo, Canada</b><svg width="12" height="6"><use href="#i-caret"/></svg></div>
      <div class="tnow d-flex align-items-baseline"><span class="big">-3°</span><span class="feels">Feels like -3°</span></div>
    </div>
  </div>
  <div class="hours"><div class="d-flex h-100" id="hours"></div>
    <svg class="temp" width="814" height="60" viewBox="0 0 814 60"><path id="tfill" fill="#f6e24c" fill-opacity=".5"/><path id="tline" fill="none" stroke="#f6d32d" stroke-width="2"/></svg>
    <div class="nextb d-flex align-items-center justify-content-center"><svg width="12" height="10"><use href="#i-arr"/></svg></div>
  </div>
</section>

<svg class="cursor" width="15" height="24" viewBox="0 0 15 24"><path d="M1.500 1.500v19l4-1.500 3.500 2.500L13.500 13z" fill="#555a5c" stroke="#0c0c0c" stroke-width="1.500"/><path d="M2.500 4.500 11 12.500" stroke="#d0d0d0" stroke-width="1"/></svg>

<script>
// Sidebar places
const S=b=>`<svg width="16" height="16" viewBox="0 0 16 16">${b}</svg>`;
const use=id=>S(`<use href="#${id}" width="16" height="16"/>`);
const places=[
 ['Recent',S('<path fill="none" stroke="currentColor" stroke-width="1.900" d="M3.500 8A5.500 5.500 0 1 1 8 13.600"/><path fill="currentColor" d="M0 7.500h6.500l-3 4z"/><path d="M9 5v3.500h2.500" fill="none" stroke="currentColor" stroke-width="1.200"/>')],
 ['Starred',S('<path fill="currentColor" d="m8 1.500 2 4.800 5 .3-3.800 3.300 1.200 5L8 12.200l-4.400 2.700 1.200-5L1 6.600l5-.3z"/>')],
 ['Home',use('i-home'),'sel'],['Desktop',use('i-desk')],['Documents',use('i-fold')],['Downloads',use('i-fold')],['Music',use('i-fold')],['Pictures',use('i-fold')],['Videos',use('i-fold')],
 ['Trash',S('<g fill="none" stroke="currentColor"><path d="M3 .8h10M.5 2.800h15" stroke-width="1.500"/><path d="M1.800 4.500C.8 8 1 12 2.700 14.800h10.600C15 12 15.200 8 14.200 4.500" stroke-width="1.700"/><path d="M5.500 5.500c-1 2.500-.8 5 0 7.500M8 5.500V13M10.500 5.500c1 2.500.8 5 0 7.500" stroke-width="1.200"/></g>')],
 ['Other Locations',S('<path stroke="currentColor" stroke-width="1.600" d="M3 8h10M8 3v10"/>'),'other']];
side.innerHTML=places.map(p=>`<a class="d-flex align-items-center ${p[2]||''}">${p[1]}${p[0]}</a>`).join('');

// Home folder content: name, icon
const f='folder';
const items=[['bin',f,'foc'],['classfiles',f,'pick'],['Desktop','desk'],['Documents',f],['dotfiles',f],['Downloads',f],['Music',f],['neofetch.sh','term'],['Pictures',f],['Public',f],['snap',f],['snapd',f],['Templates',f],['Videos',f],['yay-git',f],['.bash_logout','abc'],['.bash_profile','abc'],['.bashrc','abc'],['.bluefish',f],['.cache',f],['.config',f],['.etr',f],['.fehbg','term'],['.fonts',f],['.fonts.conf','xml'],['.gitconfig','abc'],['',f],['','abc']];
files.innerHTML=items.map(i=>`<div class="cell d-flex flex-column align-items-center"><svg width="96" height="96" color="${i[2]=='pick'?'#2f343f':'#bebebe'}" overflow="visible"><use href="#${i[1]}"/></svg><div class="lbl ${i[2]||''}">${i[0]}</div></div>`).join('');

// CPU legend
const cols=['#e6194b','#f58231','#ffe119','#bfef45','#3cb44b','#42d4f4','#4363d8','#911eb4'];
const dark=['#6d1430','#7a4a20','#7f7010','#5f7728','#1f5a28','#20697a','#22336c','#490f5a'];
const pct=['27.3%','13.1%','12.0%','15.8%','12.9%','11.9%','14.7%','14.0%'];
legend.innerHTML=pct.map((p,i)=>`<div class="lg d-flex align-items-center"><div class="sw" style="background:${cols[i]};border-color:${dark[i]}"><i></i></div><div class="lt d-flex justify-content-between"><span>CPU${i+1}</span><span>${p}</span></div></div>`).join('');

// Graph frame with grid, axis labels and smoothed series
const X0=30.5,X1=872.5,STEP=15.067;
function curve(h,H,base){ // heights are in thirds of a pixel above the base line
  let pts=h.map((v,i)=>[Math.min(35.7+STEP*i,X1),base-v/3]);
  let d=`M${X0} ${pts[0][1]}L${pts[0]}`;
  for(let i=1;i<pts.length;i++){const m=(pts[i][0]+pts[i-1][0])/2;d+=`C${m} ${pts[i-1][1]} ${m} ${pts[i][1]} ${pts[i]}`}
  return d;
}
function graph(el,H,total,yl,series){
  const t=3.5,b=t+H;let s=`<svg width="932" height="${total}" viewBox="0 0 932 ${total}"><rect x="${X0}" y="${t}" width="842" height="${H}" fill="url(#gb)"/><g stroke="#5c606d" fill="none">`;
  const vx=[171.5,311.5,451.5,592.5,732.5];
  vx.forEach(x=>s+=`<path d="M${x} ${t}V${b+4}"/>`);
  s+=`<path d="M${X0} ${Math.round(H/2)+t}H${X1+4}"/></g><path stroke="#777b87" fill="none" d="M${X0} ${b+4}V${t}H${X1+4}M${X0} ${b}H${X1+4}M${X1} ${t}V${b+4}"/><g font-size="8.700" fill="#c9d0da">`;
  s+=`<text x="33.500" y="${b+11.5}">1 min</text>`;
  vx.forEach((x,i)=>s+=`<text x="${x+3}" y="${b+11.5}" text-anchor="middle">${50-10*i} secs</text>`);
  yl.forEach((l,i)=>s+=`<text x="879" y="${t+7+i*(H-10.5)/2}">${l}</text>`);
  s+='</g>';
  series.forEach(a=>s+=`<path fill="none" stroke="${a[0]}" stroke-width="${a[2]||1.1}" d="${curve(a[1],H,b)}"/>`);
  el.innerHTML=s+'</svg>';
}
let seed=7;const rnd=()=>(seed=(seed*16807)%2147483647)/2147483647;
const bumps=[{14:48,22:43,33:48,48:63,20:36},{30:51,45:43,4:37,27:30,52:37},{15:42,17:42,27:43,47:48,6:37},{11:43,43:44,49:53,37:39,38:39,57:39},{12:48,22:56,21:46,25:36,16:38},{32:42,24:40,9:36,40:38,42:42,53:37},{3:36,10:39,11:38,52:38,54:37},{12:42,24:51,46:42,1:37,39:36}];
const cpu=bumps.map((b,k)=>[cols[k],Array.from({length:58},(_,i)=>b[i]||21+rnd()*13)]);
graph(document.getElementById('g-cpu'),50,70,['100 %','50 %','0 %'],cpu.reverse());
graph(document.getElementById('g-mem'),50,70,['100 %','50 %','0 %'],[['#8b234f',Array(58).fill(28),1.4]]);
const rx=[7,29,31,31,7,33,7,27,7,30,7,33,35,35,4,33,37,41,4,34,4,79,4,33,26,132,5,33,5,33,5,54,5,48,5,36,5,34,5,45,5,54,6,34,5,45,37,30,5,34,5,74,14,34,5,34,13];
const tx=[7,16,20,19,7,23,7,16,7,18,7,23,67,23,4,25,30,25,4,23,4,42,4,23,22,38,5,69,5,21,5,30,5,33,5,24,5,19,5,27,5,31,55,24,5,27,27,18,5,22,5,42,9,22,5,25,14];
graph(document.getElementById('g-net'),48,70,['20.0 KiB/s','10.0 KiB/s','0 bytes/s'],[['#2d7db3',rx],['#f31d04',tx]]);

// Hourly forecast
const hrs=['22','23','00','01','02','03','04','05','06','07','08'];
hours.innerHTML=hrs.map((h,i)=>`<div class="hr text-center">${h}:00<svg width="${i<8?30:32}" height="34" viewBox="${i<8?'0 0 30 34':'0 -1 32 34'}"><use href="#${i<8?'moon':'clouds'}" width="${i<8?30:32}" height="${i<8?30:27}"/></svg></div>`).join('');
const tp=[[0,40],[38,40],[114,43],[190,50],[266,53],[342,51],[418,48],[494,48],[570,44],[646,39.500],[722,34.500],[814,21.500]];
tline.setAttribute('d','M'+tp.join('L'));
tfill.setAttribute('d','M'+tp.join('L')+'V60H0Z');
</script>
</body>
</html>
